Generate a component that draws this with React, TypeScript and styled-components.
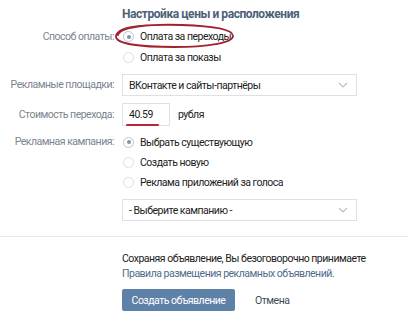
import React from "react";
import styled, { createGlobalStyle } from "styled-components";

const GlobalStyle = createGlobalStyle`
  html, body {
    margin: 0;
    padding: 0;
    background: #ffffff;
  }
  body {
    font-family: Roboto, "Open Sans", "Liberation Sans", sans-serif;
    -webkit-font-smoothing: antialiased;
  }
`;

const Page = styled.div`
  position: relative;
  width: 408px;
  height: 320px;
  overflow: hidden;
  background: #fff;
  padding-top: 5px;
  box-sizing: border-box;
  font-size: 10.5px;
  letter-spacing: -0.5px;
`;

const Title = styled.div`
  padding-left: 122px;
  height: 18px;
  line-height: 18px;
  font-size: 12px;
  letter-spacing: -0.45px;
  font-weight: 700;
  color: #4d6079;
`;

const Form = styled.div`
  display: grid;
  grid-template-columns: 114px 235px;
  column-gap: 8px;
  padding-top: 3px;
`;

const Label = styled.div<{ $h: number; $top: number }>`
  margin-top: ${(p) => p.$top}px;
  height: ${(p) => p.$h}px;
  line-height: ${(p) => p.$h}px;
  text-align: right;
  color: #7a8491;
  white-space: nowrap;
`;

const Cell = styled.div<{ $top: number }>`
  margin-top: ${(p) => p.$top}px;
  display: flex;
  flex-direction: column;
`;

const RadioRow = styled.label<{ $h: number }>`
  display: flex;
  align-items: center;
  gap: 6px;
  height: ${(p) => p.$h}px;
  color: #222;
  white-space: nowrap;
`;

const RadioMark = styled.span<{ $on?: boolean }>`
  box-sizing: border-box;
  width: 11px;
  height: 11px;
  margin-left: 1px;
  border-radius: 50%;
  border: 1px solid ${(p) => (p.$on ? "#b9c4d2" : "#d9dfe6")};
  display: flex;
  align-items: center;
  justify-content: center;
  background: #fff;
  &::after {
    content: "";
    display: ${(p) => (p.$on ? "block" : "none")};
    width: 4px;
    height: 4px;
    border-radius: 50%;
    background: #7e93ad;
  }
`;

const Select = styled.div`
  box-sizing: border-box;
  height: 22px;
  border: 1px solid #dce1e6;
  display: flex;
  align-items: center;
  justify-content: space-between;
  padding: 0 8px 0 6px;
  color: #222;
  background: #fff;
`;

const InputRow = styled.div`
  display: flex;
  align-items: center;
  gap: 8px;
  height: 23px;
  color: #222;
`;

const Input = styled.div`
  position: relative;
  box-sizing: border-box;
  width: 48px;
  height: 23px;
  border: 1px solid #dce1e6;
  padding-left: 6px;
  line-height: 21px;
  color: #222;
`;

const Underline = styled.span`
  position: absolute;
  left: 3px;
  bottom: -1px;
  width: 33px;
  height: 2px;
  background: #b8263a;
  border-radius: 1px;
`;

const Divider = styled.div`
  margin-top: 15px;
  height: 1px;
  background: #e7e8ec;
`;

const Footer = styled.div`
  padding-left: 122px;
  padding-top: 14px;
`;

const Line = styled.div<{ $link?: boolean }>`
  height: 15px;
  line-height: 15px;
  color: ${(p) => (p.$link ? "#4f6b8c" : "#222")};
  white-space: nowrap;
`;

const Actions = styled.div`
  display: flex;
  align-items: center;
  gap: 20px;
  margin-top: 8px;
`;

const Button = styled.button`
  width: 113px;
  height: 22px;
  border: 0;
  border-radius: 2px;
  background: #5e81a8;
  color: #fff;
  font-family: inherit;
  font-size: inherit;
  letter-spacing: inherit;
  padding: 0;
`;

const Cancel = styled.span`
  color: #3f4a57;
`;

const Ellipse = styled.svg`
  position: absolute;
  left: 112px;
  top: 22px;
`;

const Chevron = () => (
  <svg width="10" height="6" viewBox="0 0 10 6">
    <path d="M1 1l4 4 4-4" fill="none" stroke="#b7c0cb" strokeWidth="1.2" />
  </svg>
);

const Radio = ({ on, h, children }: { on?: boolean; h: number; children: React.ReactNode }) => (
  <RadioRow $h={h}>
    <RadioMark $on={on} />
    {children}
  </RadioRow>
);

export default function App() {
  return (
    <Page>
      <GlobalStyle />
      <Title>Настройка цены и расположения</Title>
      <Form>
        <Label $h={21} $top={0}>Способ оплаты:</Label>
        <Cell $top={0}>
          <Radio on h={21}>Оплата за переходы</Radio>
          <Radio h={21}>Оплата за показы</Radio>
        </Cell>

        <Label $h={22} $top={6}>Рекламные площадки:</Label>
        <Cell $top={6}>
          <Select>
            ВКонтакте и сайты-партнёры
            <Chevron />
          </Select>
        </Cell>

        <Label $h={23} $top={7}>Стоимость перехода:</Label>
        <Cell $top={7}>
          <InputRow>
            <Input>
              40.59
              <Underline />
            </Input>
            рубля
          </InputRow>
        </Cell>

        <Label $h={20} $top={6}>Рекламная кампания:</Label>
        <Cell $top={6}>
          <Radio on h={20}>Выбрать существующую</Radio>
          <Radio h={20}>Создать новую</Radio>
          <Radio h={20}>Реклама приложений за голоса</Radio>
        </Cell>

        <div />
        <Cell $top={7}>
          <Select>
            - Выберите кампанию -
            <Chevron />
          </Select>
        </Cell>
      </Form>
      <Divider />
      <Footer>
        <Line>Сохраняя объявление, Вы безоговорочно принимаете</Line>
        <Line $link>Правила размещения рекламных объявлений.</Line>
        <Actions>
          <Button>Создать объявление</Button>
          <Cancel>Отмена</Cancel>
        </Actions>
      </Footer>
      <Ellipse width="126" height="28" viewBox="0 0 126 28">
        <path
          d="M6 13 C 8 4, 40 2, 70 3 C 100 4, 121 7, 121 14 C 121 21, 95 25, 62 25 C 28 25, 3 22, 4 14 C 5 8, 18 5, 28 4"
          fill="none"
          stroke="#a3202f"
          strokeWidth="1.8"
          strokeLinecap="round"
        />
      </Ellipse>
    </Page>
  );
}
